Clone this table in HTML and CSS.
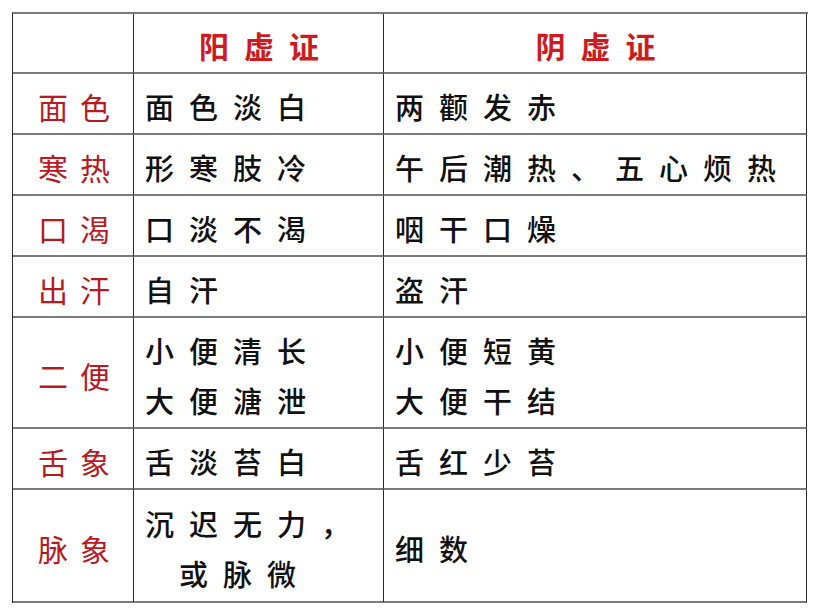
FILE: index.html
```html
<!DOCTYPE html>
<html lang="zh">
<head>
<meta charset="utf-8">
<title>阳虚证 阴虚证</title>
<link rel="stylesheet" href="styles.css">
</head>
<body>
<div class="table">
  <div class="cell corner"></div>
  <div class="cell head">阳虚证</div>
  <div class="cell head">阴虚证</div>

  <div class="cell label">面色</div>
  <div class="cell text">面色淡白</div>
  <div class="cell text">两颧发赤</div>

  <div class="cell label">寒热</div>
  <div class="cell text">形寒肢冷</div>
  <div class="cell text">午后潮热、五心烦热</div>

  <div class="cell label">口渴</div>
  <div class="cell text">口淡不渴</div>
  <div class="cell text">咽干口燥</div>

  <div class="cell label">出汗</div>
  <div class="cell text">自汗</div>
  <div class="cell text">盗汗</div>

  <div class="cell label">二便</div>
  <div class="cell text multi"><span>小便清长</span><span>大便溏泄</span></div>
  <div class="cell text multi"><span>小便短黄</span><span>大便干结</span></div>

  <div class="cell label">舌象</div>
  <div class="cell text">舌淡苔白</div>
  <div class="cell text">舌红少苔</div>

  <div class="cell label">脉象</div>
  <div class="cell text multi"><span>沉迟无力，</span><span class="indent">或脉微</span></div>
  <div class="cell text">细数</div>
</div>
</body>
</html>
```
FILE: styles.css
```css
html, body {
  margin: 0;
  padding: 0;
  background: #ffffff;
}

body {
  font-family: "Noto Sans CJK SC", "Noto Sans", sans-serif;
  padding: 12px 0 0 12px;
}

.table {
  display: grid;
  grid-template-columns: 121px 250px 423px;
  grid-template-rows: 60px 61px 61px 61px 61px 111px 61px 113px;
  width: 795px;
  border-top: 2px solid #7b7b7b;
  border-left: 1px solid #2a2a2a;
}

.cell {
  box-sizing: border-box;
  border-bottom: 2px solid #7b7b7b;
  border-right: 1px solid #2a2a2a;
  display: flex;
  align-items: center;
  font-size: 29px;
  line-height: 50px;
  letter-spacing: 15px;
  white-space: nowrap;
}

.head {
  justify-content: center;
  color: #cf1a20;
  font-weight: 700;
  font-size: 30px;
  padding-left: 16px;
  padding-top: 4px;
}

.label {
  justify-content: center;
  color: #b81a1f;
  font-size: 30px;
  letter-spacing: 12px;
  padding-left: 14px;
  padding-top: 4px;
}

.text {
  color: #111111;
  padding-left: 11px;
  padding-top: 4px;
  font-weight: 500;
}

.multi {
  flex-direction: column;
  align-items: flex-start;
  justify-content: center;
}

.indent {
  padding-left: 34px;
}
```
